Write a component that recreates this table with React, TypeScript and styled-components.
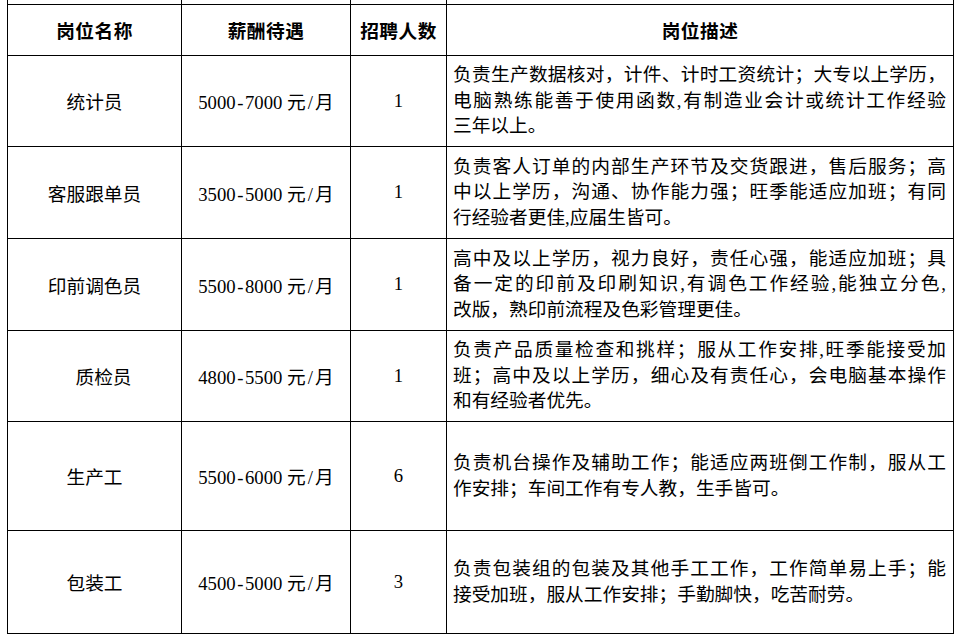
import styled, { createGlobalStyle } from "styled-components"

/* ------------------------------------------- GLOBAL ------------------------------------------- */
const GlobalStyle = createGlobalStyle`
    html, body{
        margin: 0;
        padding: 0;
        background: #fff;
    }
    body{
        font-family: "Liberation Serif", "Noto Sans CJK SC", serif;
        color: #000;
    }
`

/* --------------------------------------------- CSS -------------------------------------------- */
const Page = styled.div`
    width: 960px;
    height: 641px;
    padding-left: 7px;
    box-sizing: border-box;
    overflow: hidden;
`

const Table = styled.table`
    width: 946px;
    border-collapse: collapse;
    table-layout: fixed;
    font-size: 18.7px;

    td, th{
        border: 1px solid #000;
        padding: 0;
        vertical-align: middle;
    }
`

const CutRow = styled.tr`
    height: 4px;

    td{
        border-top: none;
    }
`

const HeadCell = styled.th`
    font-family: "Noto Sans CJK SC", sans-serif;
    font-weight: 700;
    text-align: center;
    letter-spacing: 0.5px;
`

const Row = styled.tr<{ $height: number }>`
    height: ${({ $height }) => $height}px;
`

const CenterCell = styled.td<{ $shift?: boolean }>`
    text-align: center;
    white-space: pre;
    padding-left: ${({ $shift }) => ($shift ? "18px" : "0")} !important;
`

/* os sinais - e / ocupam meia largura, como na fonte original */
const Half = styled.span`
    display: inline-block;
    width: 0.5em;
    text-align: center;
`

const DescCell = styled.td`
    padding: 0 7px 0 6px !important;
`

const Line = styled.div<{ $justify: boolean }>`
    line-height: 25.5px;
    white-space: nowrap;
    text-align: ${({ $justify }) => ($justify ? "justify" : "left")};
    text-align-last: ${({ $justify }) => ($justify ? "justify" : "left")};
`

/* -------------------------------------------- DATA -------------------------------------------- */
interface Job{
    name: string;
    min: string;
    max: string;
    count: string;
    lines: string[];
    height: number;
    shift?: boolean;
}

const jobs: Job[] = [
    {
        name: "统计员",
        min: "5000",
        max: "7000",
        count: "1",
        height: 91,
        lines: [
            "负责生产数据核对，计件、计时工资统计；大专以上学历，",
            "电脑熟练能善于使用函数,有制造业会计或统计工作经验",
            "三年以上。",
        ],
    },
    {
        name: "客服跟单员",
        min: "3500",
        max: "5000",
        count: "1",
        height: 92,
        lines: [
            "负责客人订单的内部生产环节及交货跟进，售后服务；高",
            "中以上学历，沟通、协作能力强；旺季能适应加班；有同",
            "行经验者更佳,应届生皆可。",
        ],
    },
    {
        name: "印前调色员",
        min: "5500",
        max: "8000",
        count: "1",
        height: 92,
        lines: [
            "高中及以上学历，视力良好，责任心强，能适应加班；具",
            "备一定的印前及印刷知识,有调色工作经验,能独立分色,",
            "改版，熟印前流程及色彩管理更佳。",
        ],
    },
    {
        name: "质检员",
        min: "4800",
        max: "5500",
        count: "1",
        height: 91,
        shift: true,
        lines: [
            "负责产品质量检查和挑样；服从工作安排,旺季能接受加",
            "班；高中及以上学历，细心及有责任心，会电脑基本操作",
            "和有经验者优先。",
        ],
    },
    {
        name: "生产工",
        min: "5500",
        max: "6000",
        count: "6",
        height: 109,
        lines: [
            "负责机台操作及辅助工作；能适应两班倒工作制，服从工",
            "作安排；车间工作有专人教，生手皆可。",
        ],
    },
    {
        name: "包装工",
        min: "4500",
        max: "5000",
        count: "3",
        height: 103,
        lines: [
            "负责包装组的包装及其他手工工作，工作简单易上手；能",
            "接受加班，服从工作安排；手勤脚快，吃苦耐劳。",
        ],
    },
]

/* ------------------------------------------ COMPONENT ----------------------------------------- */
export default function App() {
    return (
        <Page>
            <GlobalStyle />
            <Table>
                <colgroup>
                    <col style={{ width: 174 }} />
                    <col style={{ width: 169 }} />
                    <col style={{ width: 96 }} />
                    <col style={{ width: 507 }} />
                </colgroup>
                <tbody>
                    {/* linha cortada da tabela de cima */}
                    <CutRow>
                        <td></td>
                        <td></td>
                        <td></td>
                        <td></td>
                    </CutRow>
                    <Row $height={51}>
                        <HeadCell>岗位名称</HeadCell>
                        <HeadCell>薪酬待遇</HeadCell>
                        <HeadCell>招聘人数</HeadCell>
                        <HeadCell>岗位描述</HeadCell>
                    </Row>
                    {jobs.map(job => (
                        <Row $height={job.height} key={job.name}>
                            <CenterCell $shift={job.shift}>{job.name}</CenterCell>
                            <CenterCell>
                                {job.min}<Half>-</Half>{job.max} 元<Half>/</Half>月
                            </CenterCell>
                            <CenterCell>{job.count}</CenterCell>
                            <DescCell>
                                {job.lines.map((line, i) => (
                                    <Line key={i} $justify={i < job.lines.length - 1}>
                                        {line}
                                    </Line>
                                ))}
                            </DescCell>
                        </Row>
                    ))}
                </tbody>
            </Table>
        </Page>
    )
}
